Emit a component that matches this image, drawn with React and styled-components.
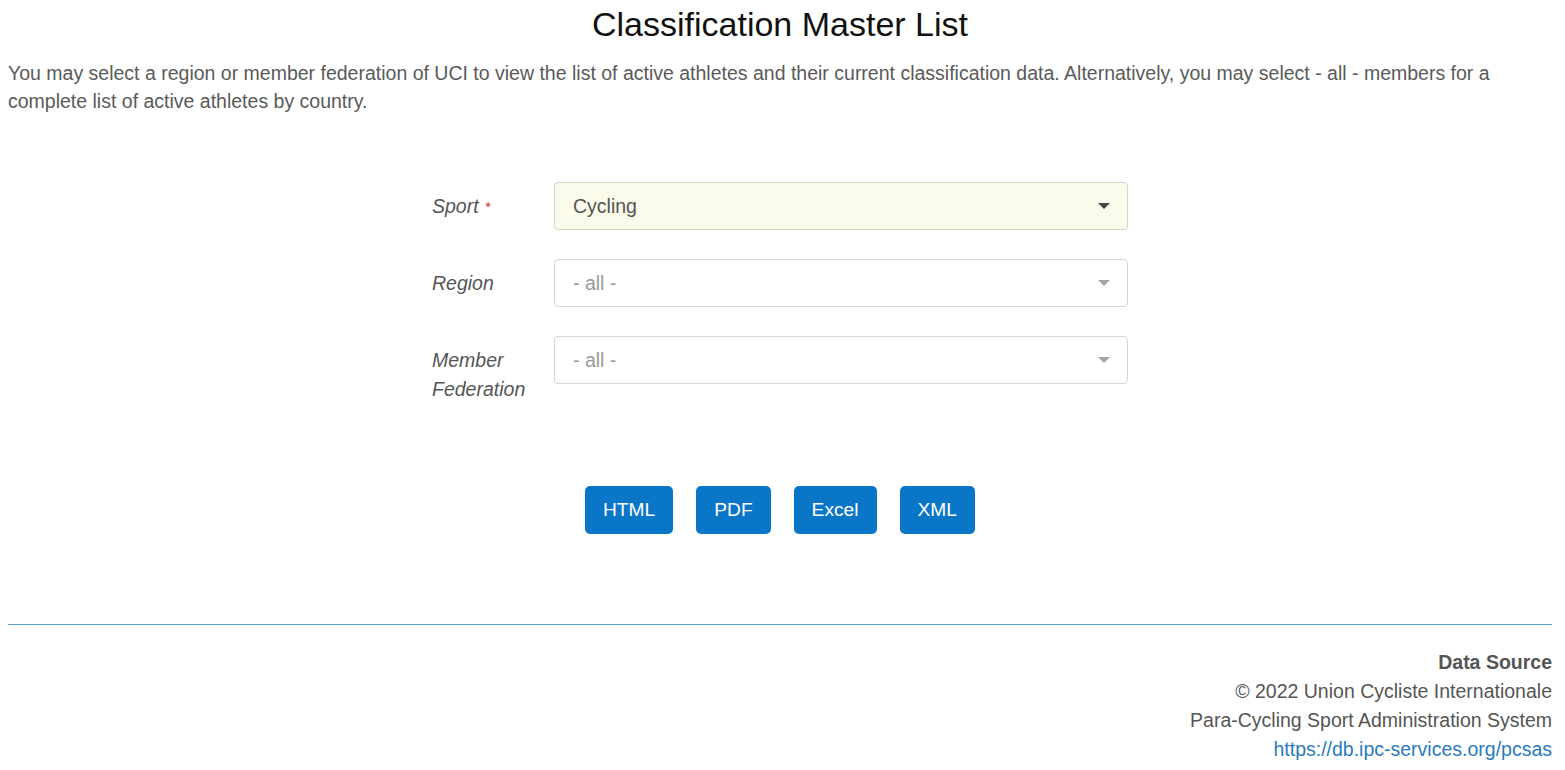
import styled, { createGlobalStyle } from "styled-components";

const GlobalStyle = createGlobalStyle`
  html, body {
    margin: 0;
    padding: 0;
    background: #fff;
  }
  body {
    font-family: "Liberation Sans", Arial, sans-serif;
    font-size: 19.5px;
    color: #555;
  }
`;

const Page = styled.div`
  padding: 4px 13px 0 8px;
`;

const Title = styled.h1`
  margin: 0;
  font-size: 34px;
  line-height: 40px;
  font-weight: normal;
  text-align: center;
  color: #111;
`;

const Intro = styled.p`
  margin: 14.5px 0 0;
  line-height: 28.5px;
  color: #5a5a5a;
`;

const Form = styled.form`
  width: 696px;
  margin: 66.5px auto 0;
  display: flex;
  flex-direction: column;
  gap: 29px;
`;

const Row = styled.div`
  display: flex;
  align-items: flex-start;
`;

const Label = styled.label`
  width: 122px;
  flex: none;
  padding-top: 10px;
  font-style: italic;
  line-height: 29px;
  color: #555;
`;

const Required = styled.span`
  color: #c9302c;
  font-size: 15px;
  vertical-align: top;
  margin-left: 6px;
`;

const Select = styled.div`
  flex: 1;
  height: 48px;
  box-sizing: border-box;
  display: flex;
  align-items: center;
  justify-content: space-between;
  padding: 0 16px 0 18px;
  border: 1px solid ${(p) => (p.$filled ? "#d4d6c4" : "#d6d6d6")};
  border-radius: 4px;
  background: ${(p) => (p.$filled ? "#fafbeb" : "#fff")};
  color: ${(p) => (p.$filled ? "#555" : "#999")};
`;

const Caret = styled.span`
  width: 0;
  height: 0;
  border-left: 6px solid transparent;
  border-right: 6px solid transparent;
  border-top: 6px solid ${(p) => (p.$dark ? "#444" : "#a5a5a5")};
  margin-right: 1px;
`;

const Buttons = styled.div`
  display: flex;
  justify-content: center;
  gap: 23px;
  margin-top: 82px;
`;

const Button = styled.button`
  height: 48px;
  padding: 0 18px;
  border: 0;
  border-radius: 5px;
  background: #0a76c8;
  color: #fff;
  font-family: "Liberation Sans", Arial, sans-serif;
  font-size: 19.2px;
  cursor: pointer;

  &:hover {
    background: #0864aa;
  }
`;

const Rule = styled.div`
  margin-top: 90px;
  height: 1px;
  background: #4f9fca;
`;

const Footer = styled.footer`
  margin-top: 23px;
  text-align: right;
  line-height: 29px;
  color: #555;
`;

const FooterLine = styled.div`
  font-weight: ${(p) => (p.$bold ? "bold" : "normal")};
`;

const Link = styled.a`
  color: #2a7bbd;
  text-decoration: none;
`;

const fields = [
  { label: "Sport", value: "Cycling", required: true, filled: true },
  { label: "Region", value: "- all -" },
  { label: "Member Federation", value: "- all -" },
];

const App = () => {
  return (
    <>
      <GlobalStyle />
      <Page>
        <Title>Classification Master List</Title>
        <Intro>
          You may select a region or member federation of UCI to view the list of active athletes and their current
          classification data. Alternatively, you may select - all - members for a complete list of active athletes by
          country.
        </Intro>

        <Form onSubmit={(e) => e.preventDefault()}>
          {fields.map((f) => (
            <Row key={f.label}>
              <Label>
                {f.label}
                {f.required && <Required>*</Required>}
              </Label>
              <Select $filled={f.filled}>
                <span>{f.value}</span>
                <Caret $dark={f.filled} />
              </Select>
            </Row>
          ))}
        </Form>

        <Buttons>
          <Button>HTML</Button>
          <Button>PDF</Button>
          <Button>Excel</Button>
          <Button>XML</Button>
        </Buttons>

        <Rule />

        <Footer>
          <FooterLine $bold>Data Source</FooterLine>
          <FooterLine>© 2022 Union Cycliste Internationale</FooterLine>
          <FooterLine>Para-Cycling Sport Administration System</FooterLine>
          <FooterLine>
            <Link href="#">https://db.ipc-services.org/pcsas</Link>
          </FooterLine>
        </Footer>
      </Page>
    </>
  );
};

export default App;
